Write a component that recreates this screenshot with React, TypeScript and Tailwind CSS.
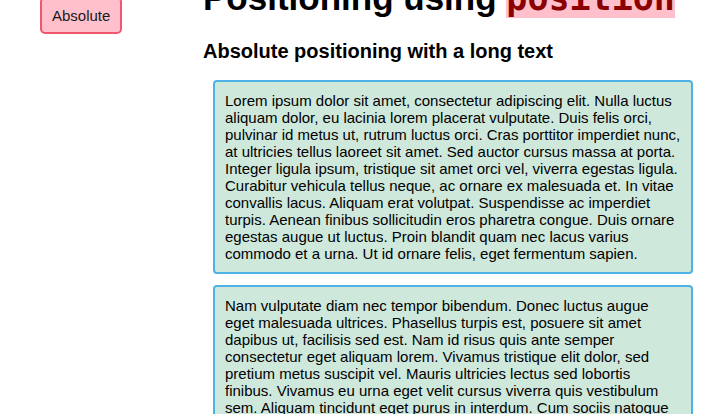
export default function App() {
  const first =
    "Lorem ipsum dolor sit amet, consectetur adipiscing elit. Nulla luctus aliquam dolor, eu lacinia lorem placerat vulputate. Duis felis orci, pulvinar id metus ut, rutrum luctus orci. Cras porttitor imperdiet nunc, at ultricies tellus laoreet sit amet. Sed auctor cursus massa at porta. Integer ligula ipsum, tristique sit amet orci vel, viverra egestas ligula. Curabitur vehicula tellus neque, ac ornare ex malesuada et. In vitae convallis lacus. Aliquam erat volutpat. Suspendisse ac imperdiet turpis. Aenean finibus sollicitudin eros pharetra congue. Duis ornare egestas augue ut luctus. Proin blandit quam nec lacus varius commodo et a urna. Ut id ornare felis, eget fermentum sapien.";
  const second =
    "Nam vulputate diam nec tempor bibendum. Donec luctus augue eget malesuada ultrices. Phasellus turpis est, posuere sit amet dapibus ut, facilisis sed est. Nam id risus quis ante semper consectetur eget aliquam lorem. Vivamus tristique elit dolor, sed pretium metus suscipit vel. Mauris ultricies lectus sed lobortis finibus. Vivamus eu urna eget velit cursus viverra quis vestibulum sem. Aliquam tincidunt eget purus in interdum. Cum sociis natoque penatibus et magnis dis parturient montes, nascetur ridiculus mus.";

  return (
    <div className="relative h-[414px] w-[711px] overflow-hidden bg-white font-['Liberation_Sans',Arial,sans-serif] text-black">
      <button className="absolute left-[40px] top-[-3px] rounded-[5px] border-2 border-[#f2566e] bg-[#ffc0cb] px-[10px] py-2 text-[15px] leading-[17px] text-[#1a1a1a]">
        Absolute
      </button>

      <div className="-mt-[22px] ml-[203px]">
        <h1 className="whitespace-nowrap text-[35px] font-bold leading-[40px]">
          Positioning using{" "}
          <code className="bg-[#ffc0cb] font-['DejaVu_Sans_Mono',monospace] text-[#8b0000]">
            position
          </code>
        </h1>
        <h2 className="mt-[22px] text-[20px] font-bold leading-[23px]">
          Absolute positioning with a long text
        </h2>

        <div className="mt-[17px] ml-[10px] flex w-[480px] flex-col gap-[11px]">
          {[first, second].map((text, i) => (
            <p
              key={i}
              className="rounded-[4px] border-2 border-[#4db3e6] bg-[#cfe8dc] p-[10px] text-[15px] leading-[17px]"
            >
              {text}
            </p>
          ))}
        </div>
      </div>
    </div>
  );
}
